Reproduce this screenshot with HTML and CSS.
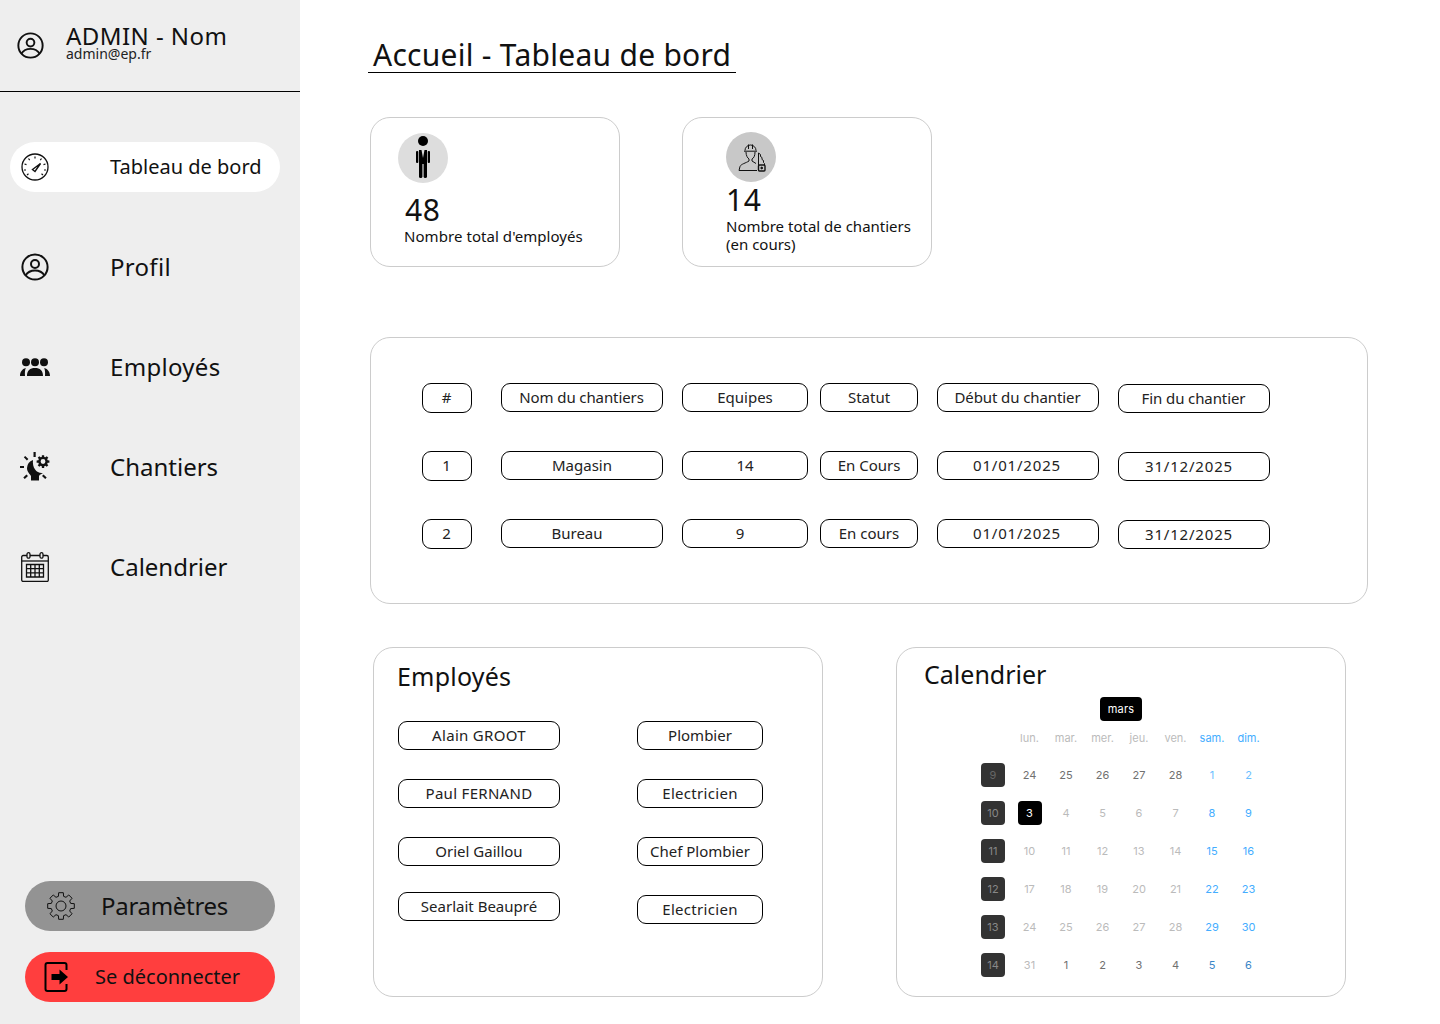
FILE: index.html
```html
<!DOCTYPE html>
<html lang="fr">
<head>
  <meta charset="UTF-8">
  <title>Accueil - Tableau de bord</title>
  <meta name="viewport" content="width=device-width, initial-scale=1.0">
  <link rel="stylesheet" href="styles.css">
</head>
<body>
  <div class="app">
    <aside class="sidebar">
      <div class="user">
        <svg class="nav-icon" viewBox="0 0 28 28" fill="none" stroke="#111" stroke-width="2"><circle cx="14" cy="14" r="12.6"/><circle cx="14" cy="11" r="4"/><path d="M4.500 22.500C7 18.500 10 17.500 14 17.500s7 1 9.500 5"/></svg>
        <div class="user-text">
          <div class="user-name">ADMIN - Nom</div>
          <div class="user-mail">admin@ep.fr</div>
        </div>
      </div>

      <nav class="nav">
        <a class="nav-item active">
          <svg class="nav-icon" viewBox="0 0 28 28" fill="none" stroke="#111" stroke-width="1.300"><circle cx="14" cy="14" r="13"/><path d="M14 3.500v2M7.500 5.500l1.200 1.600M20.500 5.500l-1.200 1.600M3.500 11l2 .6M24.500 11l-2 .6M3 17h2M23 17h2M6 22l1.500-1.200M22 22l-1.500-1.200" stroke-width="1.200"/><path d="M11.500 16.500l8-6-5.500 8z" stroke-width="1.400"/></svg>
          <span>Tableau de bord</span>
        </a>
        <a class="nav-item">
          <svg class="nav-icon" viewBox="0 0 28 28" fill="none" stroke="#111" stroke-width="2"><circle cx="14" cy="14" r="12.6"/><circle cx="14" cy="11" r="4"/><path d="M4.500 22.500C7 18.500 10 17.500 14 17.500s7 1 9.500 5"/></svg>
          <span class="loose">Profil</span>
        </a>
        <a class="nav-item">
          <svg class="nav-icon icon-group" viewBox="0 0 30 18" fill="#111"><circle cx="6" cy="4.300" r="4"/><circle cx="15" cy="4.300" r="4"/><circle cx="24" cy="4.300" r="4"/><path d="M0 18C0 14 2 11 5.800 10 4.800 12 4.800 15 5 18zM30 18c0-4-2-7-5.800-8 1 2 1 5 .8 8zM7 18c0-5.500 3-8 8-8s8 2.500 8 8z"/></svg>
          <span class="loose">Employés</span>
        </a>
        <a class="nav-item">
          <svg class="nav-icon icon-wide" viewBox="0 0 30 30" fill="#111"><path d="M13 8A9 9 0 0 0 7 16c0 4 3 6 4 8v4.500h8V24c1-2 3-2 4-3-6 1-11-5-10-13z"/><path d="M13.500 0h2.200v5h-2.200zM0 13.900h4v2.200H0zM5.200 3.900l3.200 3-1.500 1.500-3.100-3.100zM3.300 25.500l3.200-3 1.500 1.500-3.200 3zM26.700 25.500l-1.500 1.500-3.200-3 1.500-1.500z"/><path fill-rule="evenodd" transform="translate(16.300 2.800) scale(.48)" d="M11.410 4.340L11.660 .7H16.340L16.590 4.340L19 5.340L21.750 2.940L25.060 6.250L22.660 9L23.660 11.410L27.300 11.660V16.340L23.660 16.590L22.660 19L25.060 21.750L21.750 25.060L19 22.660L16.590 23.660L16.340 27.300H11.660L11.410 23.660L9 22.660L6.250 25.060L2.940 21.750L5.340 19L4.340 16.590L.7 16.340V11.660L4.340 11.410L5.340 9L2.940 6.250L6.250 2.940L9 5.340ZM14 9a5 5 0 1 0 0 10 5 5 0 0 0 0-10z"/></svg>
          <span>Chantiers</span>
        </a>
        <a class="nav-item">
          <svg class="nav-icon icon-tall" viewBox="0 0 28 30" fill="none" stroke="#111" stroke-width="1.300"><rect x=".7" y="3.500" width="26.600" height="26" rx="1.500"/><path d="M1 9h26"/><rect x="6" y=".7" width="3" height="5.500" rx="1.500" fill="#eee"/><rect x="19" y=".7" width="3" height="5.500" rx="1.500" fill="#eee"/><path d="M5.500 12.500h17v12.500h-17zM5.500 16.700h17M5.500 20.800h17M9.700 12.500V25M14 12.500V25M18.300 12.500V25"/></svg>
          <span>Calendrier</span>
        </a>
      </nav>

      <div class="side-bottom">
        <a class="side-btn settings">
          <svg class="btn-icon" viewBox="0 0 28 28" fill="none" stroke="#111" stroke-width="1" stroke-linejoin="round"><circle cx="14" cy="14" r="5"/><path d="M11.410 4.340L11.660 .7H16.340L16.590 4.340L19 5.340L21.750 2.940L25.060 6.250L22.660 9L23.660 11.410L27.300 11.660V16.340L23.660 16.590L22.660 19L25.060 21.750L21.750 25.060L19 22.660L16.590 23.660L16.340 27.300H11.660L11.410 23.660L9 22.660L6.250 25.060L2.940 21.750L5.340 19L4.340 16.590L.7 16.340V11.660L4.340 11.410L5.340 9L2.940 6.250L6.250 2.940L9 5.340Z"/></svg>
          <span>Paramètres</span>
        </a>
        <a class="side-btn logout">
          <svg class="btn-icon icon-logout" viewBox="0 0 24 30" fill="none" stroke="#000" stroke-width="2"><path d="M22 8V3a2 2 0 0 0-2-2H3a2 2 0 0 0-2 2v24a2 2 0 0 0 2 2h17a2 2 0 0 0 2-2v-5"/><path d="M7 12h8V7.500l8.500 7.500-8.500 7.500V18H7z" fill="#000" stroke="none"/></svg>
          <span>Se déconnecter</span>
        </a>
      </div>
    </aside>

    <main class="main">
      <h1 class="page-title">Accueil - Tableau de bord</h1>

      <section class="stats">
        <div class="stat-card">
          <div class="stat-icon">
            <svg class="suit" viewBox="0 0 14 42" fill="#000"><circle cx="7" cy="5" r="5"/><rect x="0" y="15" width="2.300" height="12" rx="1"/><rect x="11.700" y="15" width="2.300" height="12" rx="1"/><path d="M3 14h2.500L7 22l1.500-8H11v14H3z"/><rect x="3" y="26" width="3.400" height="16" rx="1.600"/><rect x="7.600" y="26" width="3.400" height="16" rx="1.600"/></svg>
          </div>
          <div class="stat-number">48</div>
          <div class="stat-label">Nombre total d'employés</div>
        </div>
        <div class="stat-card second">
          <div class="stat-icon">
            <svg class="worker" viewBox="0 0 28 30" fill="none" stroke="#111" stroke-width="1"><path d="M7 8.500a5.500 5.500 0 0 1 11 0M6 9.200h13M10.500 2.500v4.500M14.500 2.500v4.500"/><path d="M8 10c0 3.500 1.500 6 3 7v2c-3 2-8 3-9 5.500L1 28.500h18M17 10c0 3.500-1 6-3 7v2l4 2.500"/><path d="M20.500 23V11l2 1.500v2l1.500 1v2l1.500 1v2l1 1V23"/><rect x="20.500" y="23" width="6.500" height="6" rx="1" stroke-width="1.400"/><circle cx="23.700" cy="26" r=".9" fill="#111"/></svg>
          </div>
          <div class="stat-number">14</div>
          <div class="stat-label">Nombre total de chantiers<br>(en cours)</div>
        </div>
      </section>

      <section class="works">
        <div class="works-grid">
          <div class="pill c-id">#</div>
          <div class="pill c-wide head">Nom du chantiers</div>
          <div class="pill c-team">Equipes</div>
          <div class="pill c-state">Statut</div>
          <div class="pill c-wide head">Début du chantier</div>
          <div class="pill c-end head">Fin du chantier</div>

          <div class="pill c-id">1</div>
          <div class="pill c-wide">Magasin</div>
          <div class="pill c-team">14</div>
          <div class="pill c-state">En Cours</div>
          <div class="pill c-wide date">01/01/2025</div>
          <div class="pill c-end date">31/12/2025</div>

          <div class="pill c-id">2</div>
          <div class="pill c-wide shift-left">Bureau</div>
          <div class="pill c-team shift-left">9</div>
          <div class="pill c-state">En cours</div>
          <div class="pill c-wide date">01/01/2025</div>
          <div class="pill c-end date">31/12/2025</div>
        </div>
      </section>

      <section class="bottom">
        <div class="panel employees">
          <h2 class="panel-title">Employés</h2>
          <div class="emp-grid">
            <div class="pill loose">Alain GROOT</div>
            <div class="pill">Plombier</div>
            <div class="pill loose">Paul FERNAND</div>
            <div class="pill loose">Electricien</div>
            <div class="pill">Oriel Gaillou</div>
            <div class="pill">Chef Plombier</div>
            <div class="pill up">Searlait Beaupré</div>
            <div class="pill loose">Electricien</div>
          </div>
        </div>

        <div class="panel calendar">
          <h2 class="panel-title">Calendrier</h2>
          <div class="month">mars</div>
          <div class="cal-grid">
            <span></span>
            <span class="wd">lun.</span><span class="wd">mar.</span><span class="wd">mer.</span><span class="wd">jeu.</span><span class="wd">ven.</span><span class="wd we">sam.</span><span class="wd we">dim.</span>

            <span class="wk dim">9</span>
            <span class="d">24</span><span class="d">25</span><span class="d">26</span><span class="d">27</span><span class="d">28</span><span class="d we light">1</span><span class="d we light">2</span>

            <span class="wk">10</span>
            <span class="d today">3</span><span class="d off">4</span><span class="d off">5</span><span class="d off">6</span><span class="d off">7</span><span class="d we">8</span><span class="d we">9</span>

            <span class="wk">11</span>
            <span class="d off">10</span><span class="d off">11</span><span class="d off">12</span><span class="d off">13</span><span class="d off">14</span><span class="d we">15</span><span class="d we">16</span>

            <span class="wk">12</span>
            <span class="d off">17</span><span class="d off">18</span><span class="d off">19</span><span class="d off">20</span><span class="d off">21</span><span class="d we">22</span><span class="d we">23</span>

            <span class="wk">13</span>
            <span class="d off">24</span><span class="d off">25</span><span class="d off">26</span><span class="d off">27</span><span class="d off">28</span><span class="d we">29</span><span class="d we">30</span>

            <span class="wk">14</span>
            <span class="d off">31</span><span class="d">1</span><span class="d">2</span><span class="d">3</span><span class="d">4</span><span class="d we next">5</span><span class="d we next">6</span>
          </div>
        </div>
      </section>
    </main>
  </div>
</body>
</html>
```

FILE: styles.css
```css
* {
  box-sizing: border-box;
}
body {
  margin: 0;
  background: #fff;
  color: #111;
  font-family: "Noto Sans", sans-serif;
}
.app {
  display: flex;
  width: 1440px;
  height: 1024px;
  overflow: hidden;
}
.loose {
  letter-spacing: .3px;
}

/* sidebar */
.sidebar {
  width: 300px;
  flex: none;
  background: #eee;
  display: flex;
  flex-direction: column;
  padding-bottom: 22px;
}
.user {
  height: 92px;
  border-bottom: 1px solid #000;
  display: flex;
  align-items: flex-start;
  padding: 32px 0 0 17px;
  gap: 22px;
}
.user .nav-icon {
  width: 27px;
  height: 27px;
  margin-right: 0;
}
.user-text {
  margin-top: -6px;
}
.user-name {
  font-size: 24px;
  line-height: 20px;
  letter-spacing: .45px;
}
.user-mail {
  font-size: 14px;
  line-height: 10px;
  margin-top: 3px;
  color: #222;
}
.nav {
  margin-top: 50px;
  display: flex;
  flex-direction: column;
  gap: 50px;
}
.nav-item {
  height: 50px;
  width: 270px;
  margin-left: 10px;
  border-radius: 25px;
  display: flex;
  align-items: center;
  padding-left: 11px;
  gap: 46px;
  font-size: 24px;
}
.nav-item span {
  margin-top: -2px;
}
.nav-item.active {
  background: #fff;
  font-size: 20px;
}
.nav-icon {
  width: 28px;
  height: 28px;
  flex: none;
  margin-right: 15px;
}
.icon-group {
  width: 30px;
  height: 18px;
  margin-left: -1px;
  margin-right: 14px;
}
.icon-wide {
  width: 30px;
  height: 30px;
  margin-left: -1px;
  margin-right: 14px;
}
.icon-tall {
  height: 30px;
}
.side-bottom {
  margin-top: auto;
  display: flex;
  flex-direction: column;
  gap: 21px;
  padding-left: 25px;
}
.side-btn {
  width: 250px;
  height: 50px;
  border-radius: 25px;
  display: flex;
  align-items: center;
}
.side-btn span {
  margin-top: -2px;
}
.settings {
  background: #939393;
  font-size: 24px;
  letter-spacing: -.3px;
  padding-left: 22px;
  gap: 26px;
}
.logout {
  background: #ff3e3e;
  font-size: 20px;
  padding-left: 19px;
  gap: 26px;
  color: #111;
}
.btn-icon {
  width: 28px;
  height: 28px;
  flex: none;
}
.icon-logout {
  width: 25px;
  height: 30px;
}

/* main column */
.main {
  flex: 1;
  padding: 35px 0 0 70px;
}
.page-title {
  display: inline-block;
  margin: 0 0 0 -2px;
  padding: 2px 5px 0;
  width: 368px;
  font-size: 30px;
  font-weight: 400;
  line-height: 35px;
  letter-spacing: .27px;
  white-space: nowrap;
  border-bottom: 1px solid #000;
}
.stats {
  display: flex;
  gap: 62px;
  margin-top: 44px;
}
.stat-card {
  width: 250px;
  height: 150px;
  border: 1px solid #ccc;
  border-radius: 20px;
  padding: 15px 0 0 27px;
}
.stat-card.second {
  padding: 14px 0 0 43px;
}
.stat-icon {
  width: 50px;
  height: 50px;
  border-radius: 50%;
  background: #ddd;
  display: flex;
  align-items: center;
  justify-content: center;
}
.second .stat-icon {
  background: #c8c8c8;
}
.suit {
  width: 14px;
  height: 42px;
  margin-top: -2px;
}
.worker {
  width: 28px;
  height: 30px;
  margin-left: 2px;
}
.stat-number {
  font-size: 30px;
  line-height: 34px;
  letter-spacing: .5px;
  margin: 10px 0 0 7px;
}
.stat-label {
  font-size: 15px;
  line-height: 18px;
  letter-spacing: .06px;
  margin: 0 0 0 6px;
}
.second .stat-number {
  margin: 1px 0 0 0;
}
.second .stat-label {
  margin: 0;
  letter-spacing: 0;
}

/* pills */
.pill {
  border: 1px solid #000;
  border-radius: 9px;
  height: 29px;
  font-size: 15px;
  line-height: 27px;
  text-align: center;
  color: #222;
}
.works {
  margin-top: 70px;
  width: 998px;
  height: 267px;
  border: 1px solid #ccc;
  border-radius: 20px;
  padding: 45px 0 0 51px;
}
.works-grid {
  display: grid;
  grid-template-columns: 79px 181px 138px 117px 181px 152px;
  grid-auto-rows: 29px;
  row-gap: 39px;
  align-items: start;
}
.c-id {
  width: 50px;
  height: 30px;
  padding-right: 1px;
}
.c-wide {
  width: 162px;
}
.c-team {
  width: 126px;
}
.c-state {
  width: 98px;
}
.c-end {
  width: 152px;
  margin-top: 1px;
}
.head {
  letter-spacing: -.1px;
  padding-right: 1px;
}
.date {
  letter-spacing: .8px;
  padding-right: 2px;
}
.c-end.date {
  padding-right: 10px;
}
.shift-left {
  padding-right: 10px;
}

/* bottom panels */
.bottom {
  display: flex;
  gap: 73px;
  margin: 43px 0 0 3px;
}
.panel {
  width: 450px;
  height: 350px;
  border: 1px solid #ccc;
  border-radius: 20px;
}
.panel-title {
  margin: 0;
  font-size: 25px;
  font-weight: 400;
  line-height: 30px;
}
.employees {
  padding: 13px 0 0 24px;
}
.employees .panel-title {
  margin-left: -1px;
  letter-spacing: .2px;
}
.emp-grid {
  display: grid;
  grid-template-columns: 162px 126px;
  column-gap: 77px;
  grid-auto-rows: 29px;
  row-gap: 29px;
  margin-top: 30px;
}
.up {
  margin-top: -3px;
}
.calendar {
  padding-top: 11px;
}
.calendar .panel-title {
  padding-left: 27px;
}
.month {
  width: 42px;
  height: 24px;
  margin: 8px auto 0;
  background: #000;
  color: #fff;
  border-radius: 4px;
  font: 400 11px/24px Inter, sans-serif;
  letter-spacing: .2px;
  text-align: center;
}
.cal-grid {
  display: grid;
  grid-template-columns: repeat(8, 24px);
  grid-template-rows: 23px repeat(6, 24px);
  column-gap: 12.5px;
  row-gap: 14px;
  margin: 5px 0 0 84px;
  font: 11px/25px Inter, sans-serif;
  text-align: center;
}
.wd {
  color: #bbb;
  line-height: 24px;
  white-space: nowrap;
  justify-self: center;
}
.d {
  color: #707070;
}
.off {
  color: #bbb;
}
.we {
  color: #44adff;
}
.light {
  color: #6cc0ff;
}
.next {
  color: #3a86c8;
}
.wk {
  background: #333;
  color: #888;
  border-radius: 4px;
}
.wk.dim {
  color: #666;
}
.today {
  background: #000;
  color: #fff;
  border-radius: 4px;
}
```
